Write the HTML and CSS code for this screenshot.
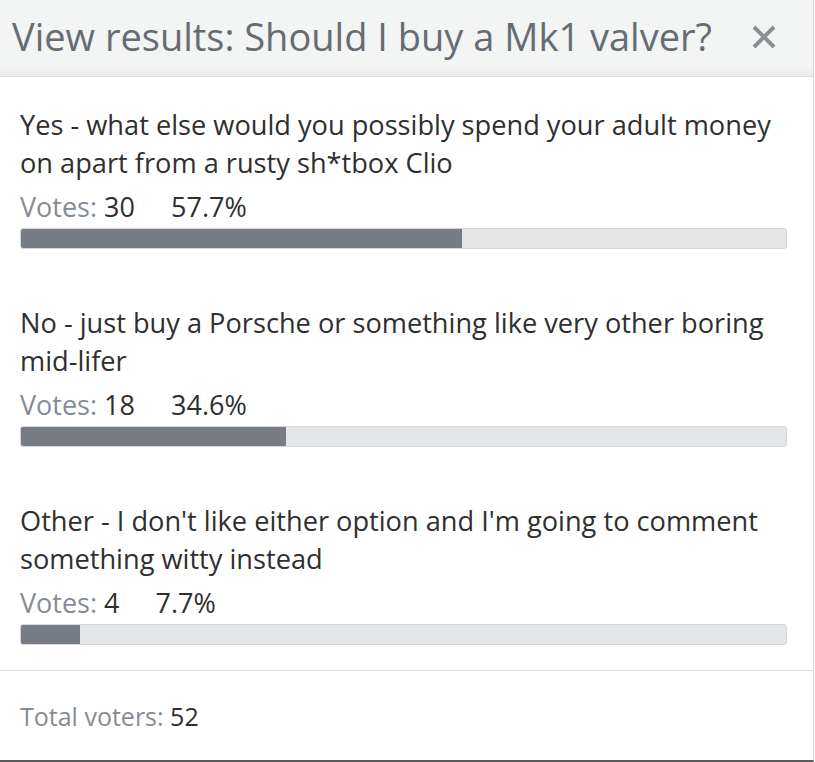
FILE: index.html
```html
<!DOCTYPE html>
<html>
	<head>
		<meta charset="UTF-8">
		<title>View results</title>
		<link rel="stylesheet" href="styles.css">
	</head>
	<body>
		<div class="modal">
			<div class="modal-head">
				<h1 class="modal-title">View results: Should I buy a Mk1 valver?</h1>
				<svg class="close" width="26" height="24" viewBox="0 0 26 24"><path d="M3 2L23 22M23 2L3 22" stroke="#8c9095" stroke-width="4"/></svg>
			</div>
			<div class="modal-body">
				<div class="option">
					<p class="answer">Yes - what else would you possibly spend your adult money on apart from a rusty sh*tbox Clio</p>
					<div class="count"><span class="label">Votes:</span> 30 <span class="pct">57.7%</span></div>
					<div class="bar"><div class="fill" style="width: 57.7%"></div></div>
				</div>
				<div class="option">
					<p class="answer">No - just buy a Porsche or something like very other boring mid-lifer</p>
					<div class="count"><span class="label">Votes:</span> 18 <span class="pct">34.6%</span></div>
					<div class="bar"><div class="fill" style="width: 34.6%"></div></div>
				</div>
				<div class="option">
					<p class="answer">Other - I don't like either option and I'm going to comment something witty instead</p>
					<div class="count"><span class="label">Votes:</span> 4 <span class="pct">7.7%</span></div>
					<div class="bar"><div class="fill" style="width: 7.7%"></div></div>
				</div>
			</div>
			<div class="modal-foot">
				<span><span class="label">Total voters:</span> 52</span>
			</div>
		</div>
	</body>
</html>
```

FILE: styles.css
```css
body{
	margin: 0;
	background: #fff;
	font-family: "Open Sans", sans-serif;
	color: #2f2f2f;
}
.modal{
	width: 813px;
	height: 760px;
	border-right: 1px solid #d4d4d4;
	border-bottom: 2px solid #5a5a5a;
	display: flex;
	flex-direction: column;
}
.modal-head{
	flex: none;
	height: 77px;
	box-sizing: border-box;
	background: linear-gradient(#f3f4f4 85%, #eaebeb);
	border-bottom: 1px solid #d9dada;
	display: flex;
	align-items: center;
	justify-content: space-between;
	padding: 0 36px 4px 12px;
}
.modal-title{
	margin: 0;
	font-size: 38px;
	font-weight: normal;
	color: #666c72;
	white-space: nowrap;
}
.close{
	flex: none;
	margin-top: 2px;
}
.modal-body{
	flex: none;
	padding: 29px 26px 0 20px;
}
.option{
	margin-bottom: 55px;
}
.option:last-child{
	margin-bottom: 25px;
}
.answer{
	margin: 0;
	font-size: 27.2px;
	line-height: 38px;
}
.count{
	margin-top: 7px;
	font-size: 27px;
	line-height: 35px;
}
.label{
	color: #868c93;
}
.pct{
	margin-left: 29px;
}
.bar{
	margin-top: 4px;
	height: 19px;
	background: #e4e5e7;
	border: 1px solid #d6d7d9;
	border-radius: 3px;
	overflow: hidden;
}
.fill{
	height: 100%;
	background: #777c84;
}
.modal-foot{
	flex: 1;
	border-top: 1px solid #dedede;
	display: flex;
	align-items: center;
	padding: 0 20px;
	font-size: 25px;
}
```
